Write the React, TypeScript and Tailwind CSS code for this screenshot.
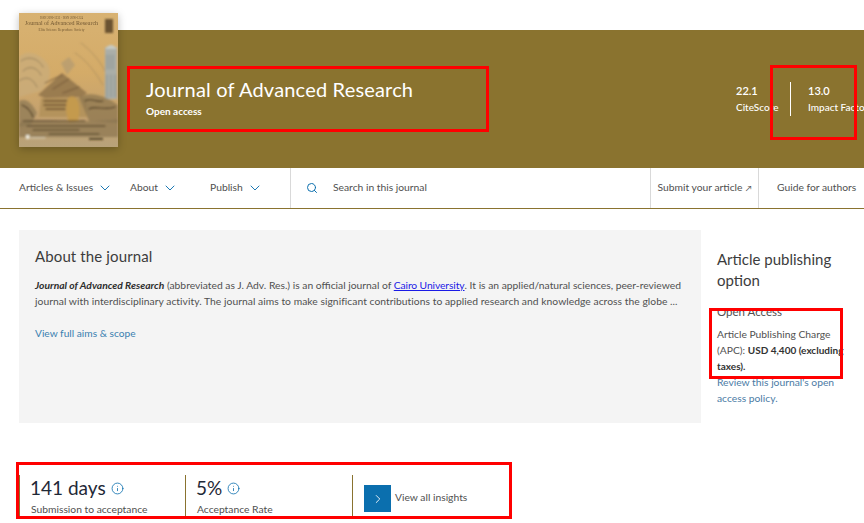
import { ChevronDown, ChevronRight, Info, Search } from "lucide-react";

const FONT = "font-['Lato','Noto_Sans',sans-serif]";

function Cover() {
  return (
    <div className="relative z-10 -mt-[17px] h-[134px] w-[99px] shrink-0 overflow-hidden bg-[#d3a862] shadow-[0_2px_8px_rgba(0,0,0,0.25)]">
      <svg viewBox="0 0 99 134" className="absolute inset-0 size-full" aria-hidden>
        <defs>
          <linearGradient id="paper" x1="0" y1="0" x2="0" y2="1">
            <stop offset="0" stopColor="#d8b272" />
            <stop offset="0.45" stopColor="#d4ab68" />
            <stop offset="0.8" stopColor="#c2a070" />
            <stop offset="1" stopColor="#b8a27a" />
          </linearGradient>
          <filter id="soft">
            <feGaussianBlur stdDeviation="0.8" />
          </filter>
        </defs>
        <rect width="99" height="134" fill="url(#paper)" />
        <g filter="url(#soft)" fill="none" strokeLinecap="round">
          <path d="M0 44 C8 36 20 40 28 50 C34 58 30 70 22 78 L0 84Z" fill="#c9ad7c" opacity="0.7" />
          <path d="M2 48 C10 42 20 46 24 54 M4 58 C10 52 18 54 22 62 M0 68 C8 62 14 66 18 74" stroke="#8f7a58" strokeWidth="0.9" />
          <path d="M42 50 L50 44 L56 52 L48 62Z" fill="#b79c70" opacity="0.8" />
          <path d="M56 40 C66 46 76 58 84 72 M62 30 C70 36 80 46 86 58" stroke="#a98c5c" strokeWidth="0.8" />
          <rect x="86" y="34" width="12" height="52" fill="#aaaea8" />
          <path d="M86 36 Q92 28 98 36Z" fill="#c6cac4" />
          <path d="M88 42 V56 M91 42 V56 M94 42 V56 M88 62 V84 M92 62 V84 M96 62 V84" stroke="#7f8c8c" strokeWidth="0.8" />
          <path d="M19 82 L43 60 L68 80 L62 84 L26 85Z" fill="#9a7b50" />
          <path d="M26 70 L43 62 M34 76 L50 66 M44 80 L60 74" stroke="#6d5233" strokeWidth="0.9" />
          <path d="M22 85 H68 V104 H20Z" fill="#b4935c" />
          <path d="M25 88 H48 M25 92 H48 M27 96 H46" stroke="#5f4526" strokeWidth="1.3" />
          <path d="M50 84 C58 80 63 92 59 108 L50 110 C46 98 46 90 50 84Z" fill="#c49a4e" />
          <path d="M60 84 C70 78 86 82 99 92 V110 L70 108Z" fill="#8d7750" opacity="0.75" />
          <path d="M66 88 C72 84 78 90 84 88 M70 96 C76 92 86 98 96 94" stroke="#4f3d25" strokeWidth="1.1" />
          <path d="M0 88 C8 84 14 92 18 100 L12 112 L0 114Z" fill="#8f7a54" opacity="0.75" />
          <path d="M3 92 C8 94 12 98 14 104" stroke="#4f3d25" strokeWidth="1.1" />
          <path d="M0 110 C24 104 48 112 99 106 V124 H0Z" fill="#8a7550" opacity="0.7" />
          <path d="M4 108 H66 M8 113 H86 M14 117 H60 M30 121 H80" stroke="#4a3a24" strokeWidth="1.1" />
          <rect x="7" y="122" width="3.5" height="4" fill="#ece8da" />
          <path d="M12 125 H26" stroke="#d9d2bc" strokeWidth="1" />
          <rect x="70" y="125" width="14" height="1.6" fill="#3a2d1a" />
          <rect x="86" y="6" width="8" height="14" fill="#6a5230" />
        </g>
      </svg>
      <div className="relative flex flex-col items-center pt-[4px] pr-[14px] font-['Liberation_Serif',serif] text-[#5a4324] opacity-80">
        <span className="text-[3px] leading-[3px]">ISSN 2090-1232 · ISSN 2090-1224</span>
        <span className="whitespace-nowrap text-[6px] leading-[7px]">Journal of Advanced Research</span>
        <span className="whitespace-nowrap text-[3.5px] leading-[6px]">Elite Science Reproduce Society</span>
      </div>
    </div>
  );
}

function NavMenu({ label, className }: { label: string; className: string }) {
  return (
    <div className={`flex items-center gap-[4px] ${className}`}>
      <span>{label}</span>
      <ChevronDown className="size-[16px] text-[#0b6fae]" strokeWidth={1.4} />
    </div>
  );
}

function Stat({ value, label, className }: { value: string; label: string; className: string }) {
  return (
    <div className={`h-[42px] border-l border-[#8a732f] ${className}`}>
      <div className="flex items-center gap-[5px] pl-[10px] text-[19px] leading-[26px] text-[#1f2937]">
        <span>{value}</span>
        <Info className="size-[13px] text-[#0b6fae]" strokeWidth={1.5} />
      </div>
      <p className="mt-[2px] pl-[11px] text-[10.3px] leading-[13px] text-[#505050]">{label}</p>
    </div>
  );
}

export default function App() {
  return (
    <div className={`relative h-[523px] w-[864px] overflow-hidden bg-white pt-[30px] ${FONT}`}>
      {/* Journal banner */}
      <header className="flex h-[138px] bg-[#8a732f] pl-[19px] text-white">
        <Cover />
        <div className="ml-[28px] pt-[46px]">
          <h1 className="text-[20px] leading-[27px] tracking-[0.18px]">Journal of Advanced Research</h1>
          <p className="mt-[1px] text-[10px] font-bold leading-[14px]">Open access</p>
        </div>
        <div className="ml-auto mr-[1px] mt-[52px] flex h-[34px] self-start text-[10px]">
          <div className="w-[54px] pt-[2px]">
            <p className="text-[11px] font-semibold leading-[14px]">22.1</p>
            <p className="mt-[3px] font-medium leading-[13px]">CiteScore</p>
          </div>
          <div className="w-[73px] whitespace-nowrap border-l border-white pl-[17px] pt-[2px]">
            <p className="text-[11px] font-semibold leading-[14px]">13.0</p>
            <p className="mt-[3px] font-medium leading-[13px]">Impact Factor</p>
          </div>
        </div>
      </header>

      {/* Journal nav */}
      <nav className="flex h-[41px] border-b border-[#8a732f] text-[10.3px] text-[#505050]">
        <div className="flex w-[291px] items-center border-r border-[#d9d9d9] pl-[19px]">
          <NavMenu label="Articles & Issues" className="w-[111px]" />
          <NavMenu label="About" className="w-[80px]" />
          <NavMenu label="Publish" className="" />
        </div>
        <div className="flex flex-1 items-center gap-[15px] pl-[15px]">
          <Search className="size-[12px] text-[#0b6fae]" strokeWidth={2} />
          <span>Search in this journal</span>
        </div>
        <div className="flex w-[109px] items-center justify-center gap-[3px] whitespace-nowrap border-x border-[#d9d9d9]">
          Submit your article <span className="text-[8px]">↗</span>
        </div>
        <div className="flex w-[105px] items-center whitespace-nowrap pl-[18px]">Guide for authors</div>
      </nav>

      {/* About + publishing option */}
      <main className="mt-[21px] flex pl-[19px]">
        <section className="h-[193px] w-[682px] bg-[#f4f4f4] px-[16px] pt-[16px]">
          <h2 className="text-[15px] leading-[20px] tracking-[0.12px] text-[#3c3c3c]">About the journal</h2>
          <p className="mt-[11px] whitespace-nowrap text-[10.3px] leading-[16px] text-[#505050]">
            <b className="font-bold italic text-[#2e2e2e]">Journal of Advanced Research</b> (abbreviated as J. Adv. Res.) is an official
            journal of <a className="tracking-[-0.1px] text-[#1a1ae6] underline">Cairo University</a>. It is an applied/natural sciences, peer-reviewed
            <br />
            <span className="tracking-[0.04px]">
              journal with interdisciplinary activity. The journal aims to make significant contributions to applied research and knowledge across the globe ...
            </span>
          </p>
          <p className="mt-[16px] text-[10.2px] leading-[16px] text-[#3a7fb0]">View full aims &amp; scope</p>
        </section>
        <aside className="ml-[16px] w-[130px] pt-[19px]">
          <h2 className="text-[15px] leading-[21px] text-[#3c3c3c]">
            Article publishing
            <br />
            option
          </h2>
          <h3 className="mt-[13px] text-[11.5px] leading-[16px] text-[#505050]">Open Access</h3>
          <p className="mt-[6px] text-[10.3px] leading-[16px] text-[#505050]">
            Article Publishing Charge
            <br />
            (APC): <b className="text-[10px] font-bold text-[#323232]">USD 4,400 (excluding</b>
            <br />
            <b className="text-[10px] font-bold text-[#323232]">taxes).</b>
          </p>
          <p className="text-[10.3px] leading-[16px] text-[#4b7ba5]">
            Review this journal's open
            <br />
            access policy.
          </p>
        </aside>
      </main>

      {/* Insights row */}
      <section className="mt-[52px] flex pl-[19px]">
        <Stat value="141 days" label="Submission to acceptance" className="w-[166px]" />
        <Stat value="5%" label="Acceptance Rate" className="w-[167px]" />
        <div className="flex h-[42px] items-center gap-[4px] border-l border-[#8a732f] pl-[11px] pt-[5px] text-[10.3px] text-[#505050]">
          <span className="flex size-[27px] items-center justify-center bg-[#0b6fae] text-white">
            <ChevronRight className="size-[14px]" strokeWidth={1.5} />
          </span>
          <span className="-mt-[1px]">View all insights</span>
        </div>
      </section>

      {/* Red annotation boxes */}
      <div className="absolute left-[127px] top-[66px] h-[66px] w-[362px] border-[3px] border-[#ff0000]" />
      <div className="absolute left-[770px] top-[65px] h-[75px] w-[87px] border-[3px] border-[#ff0000]" />
      <div className="absolute left-[709px] top-[308px] h-[71px] w-[134px] border-[3px] border-[#ff0000]" />
      <div className="absolute left-[16px] top-[462px] h-[57px] w-[496px] border-[3px] border-[#ff0000]" />
    </div>
  );
}
